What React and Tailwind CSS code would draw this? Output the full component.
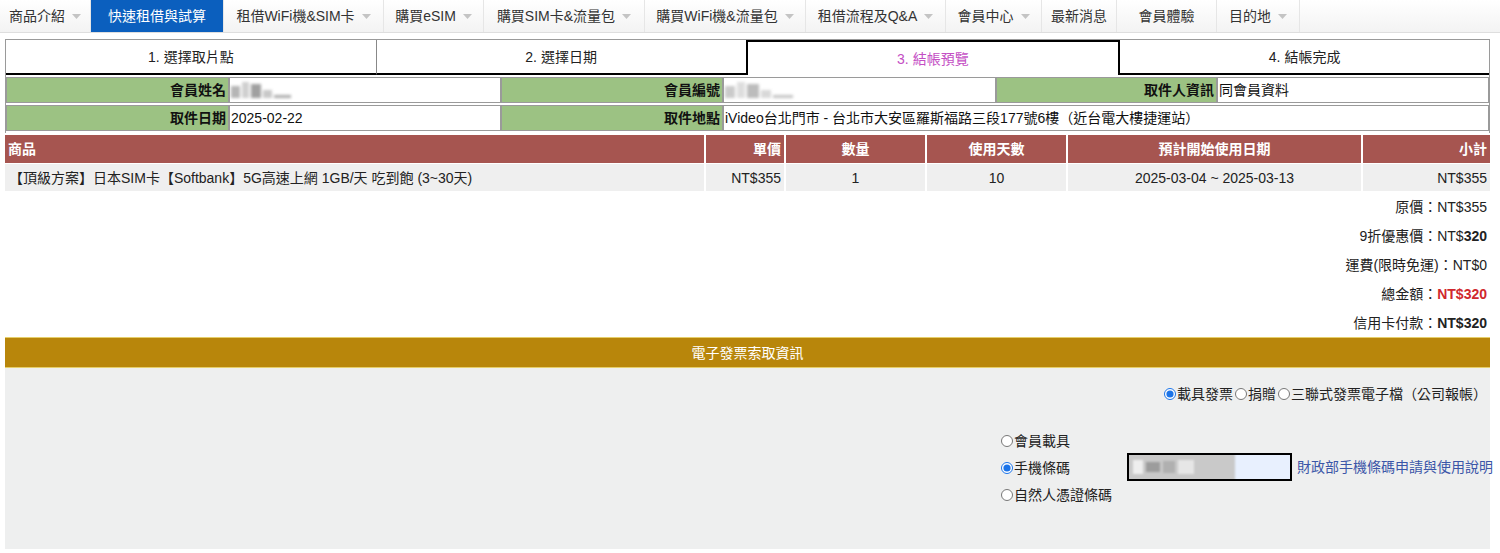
import React from 'react';

const navItems = [
  { label: '商品介紹', w: 'w-[91px]', caret: true },
  { label: '快速租借與試算', w: 'w-[133px]', active: true },
  { label: '租借WiFi機&SIM卡', w: 'w-[160px]', caret: true },
  { label: '購買eSIM', w: 'w-[100px]', caret: true },
  { label: '購買SIM卡&流量包', w: 'w-[161px]', caret: true },
  { label: '購買WiFi機&流量包', w: 'w-[161px]', caret: true },
  { label: '租借流程及Q&A', w: 'w-[140px]', caret: true },
  { label: '會員中心', w: 'w-[96px]', caret: true },
  { label: '最新消息', w: 'w-[75px]' },
  { label: '會員體驗', w: 'w-[100px]' },
  { label: '目的地', w: 'w-[83px]', caret: true },
];

function Caret() {
  return (
    <svg width="9" height="5" viewBox="0 0 9 5" className="ml-[7px] mt-[1px]">
      <path d="M0 0h9L4.5 5z" fill="#c4c4c4" />
    </svg>
  );
}

function Blur({ className }) {
  return (
    <div className={'flex items-end gap-[2px] blur-[1.5px] ' + className}>
      <div className="h-[12px] w-[10px] bg-[#b5b5b5]" />
      <div className="h-[16px] w-[8px] bg-[#d0d0d0]" />
      <div className="h-[14px] w-[12px] bg-[#a0a0a0]" />
      <div className="h-[8px] w-[10px] bg-[#c8c8c8]" />
      <div className="h-[3px] w-[20px] bg-[#aaaaaa]" />
    </div>
  );
}

function Label({ children }) {
  return (
    <div className="flex items-center justify-end border border-[#9a9a9a] bg-[#9cc283] pr-[2px] font-bold text-[#111]">
      {children}
    </div>
  );
}

function Value({ children, className = '' }) {
  return (
    <div className={'flex items-center border border-[#9a9a9a] bg-white pl-[1px] text-[#111] ' + className}>
      {children}
    </div>
  );
}

function Radio({ checked, label, name }) {
  return (
    <label className="flex items-center whitespace-nowrap">
      <input type="radio" name={name} defaultChecked={checked} className="m-0 mr-[1px] h-[12px] w-[12px] shrink-0 accent-[#1a73e8]" />
      <span>{label}</span>
    </label>
  );
}

export default function App() {
  const font = { fontFamily: '"Liberation Sans", "Noto Sans CJK TC", sans-serif' };
  return (
    <div className="h-[553px] w-[1500px] overflow-hidden bg-white text-[14px] leading-[20px] text-[#222]" style={font}>
      {/* nav */}
      <div className="flex h-[33px] border-b border-[#dedede] bg-gradient-to-b from-white to-[#f3f3f3]">
        {navItems.map((item) => (
          <div
            key={item.label}
            className={
              'flex items-center justify-center border-r border-[#e6e6e6] ' +
              item.w +
              (item.active ? ' bg-[#0b5fbe] text-white' : ' text-[#333]')
            }
          >
            <span>{item.label}</span>
            {item.caret && <Caret />}
          </div>
        ))}
      </div>

      <div className="ml-[5px] mt-[6px] w-[1485px]">
        {/* steps */}
        <div className="border border-[#9a9a9a] border-b-0">
          <div className="grid h-[35px] grid-cols-4">
            <div className="flex items-center justify-center border-b-2 border-r border-black border-r-[#888]">1. 選擇取片點</div>
            <div className="flex items-center justify-center border-b-2 border-r-2 border-black">2. 選擇日期</div>
            <div className="flex items-center justify-center border-t-2 border-black text-[#c44ec4]">3. 結帳預覽</div>
            <div className="flex items-center justify-center border-b-2 border-l-2 border-black">4. 結帳完成</div>
          </div>

          {/* member info */}
          <div className="grid grid-cols-[223px_272px_222px_273px_221px_1fr] gap-y-[2px] py-[2px]">
            <Label>會員姓名</Label>
            <Value className="h-[26px]"><Blur className="w-[60px]" /></Value>
            <Label>會員編號</Label>
            <Value><Blur className="w-[90px] opacity-70" /></Value>
            <Label>取件人資訊</Label>
            <Value>同會員資料</Value>
            <Label>取件日期</Label>
            <Value className="h-[26px]">2025-02-22</Value>
            <Label>取件地點</Label>
            <Value className="col-span-3">iVideo台北門市 - 台北市大安區羅斯福路三段177號6樓（近台電大樓捷運站）</Value>
          </div>
        </div>

        {/* product table */}
        <div className="mt-[2px] grid grid-cols-[699px_78px_139px_139px_293px_1fr] gap-x-[2px] gap-y-[1px]">
          {['商品', '單價', '數量', '使用天數', '預計開始使用日期', '小計'].map((h, i) => (
            <div
              key={h}
              className={
                'flex h-[28px] items-center bg-[#a65550] px-[3px] font-bold text-white ' +
                (i === 0 ? 'justify-start' : i === 1 || i === 5 ? 'justify-end' : 'justify-center')
              }
            >
              {h}
            </div>
          ))}
          <div className="flex h-[27px] items-center bg-[#efefef] pl-[4px]">【頂級方案】日本SIM卡【Softbank】5G高速上網 1GB/天 吃到飽 (3~30天)</div>
          <div className="flex items-center justify-end bg-[#efefef] px-[3px]">NT$355</div>
          <div className="flex items-center justify-center bg-[#efefef]">1</div>
          <div className="flex items-center justify-center bg-[#efefef]">10</div>
          <div className="flex items-center justify-center bg-[#efefef]">2025-03-04 ~ 2025-03-13</div>
          <div className="flex items-center justify-end bg-[#efefef] px-[3px]">NT$355</div>
        </div>

        {/* summary */}
        <div className="flex flex-col items-end pr-[3px] pt-[1px] text-[#222]">
          <div className="flex h-[29px] items-center">原價：NT$355</div>
          <div className="flex h-[29px] items-center">9折優惠價：NT$<b>320</b></div>
          <div className="flex h-[29px] items-center">運費(限時免運)：NT$0</div>
          <div className="flex h-[29px] items-center">總金額：<b className="text-[#d0272d]">NT$320</b></div>
          <div className="flex h-[29px] items-center">信用卡付款：<b>NT$320</b></div>
        </div>

        {/* invoice */}
        <div className="flex h-[31px] items-center justify-center border-y border-[#e6cf6a] bg-[#b8860b] text-white">電子發票索取資訊</div>
        <div className="h-[181px] bg-[#eeefef]">
          <div className="flex justify-end pr-[3px] pt-[16px]">
            <Radio name="type" checked label="載具發票" />
            <span className="w-[2px]" />
            <Radio name="type" label="捐贈" />
            <span className="w-[2px]" />
            <Radio name="type" label="三聯式發票電子檔（公司報帳）" />
          </div>
          <div className="ml-[996px] mt-[23px] flex items-start whitespace-nowrap">
            <div className="flex w-[126px] shrink-0 flex-col">
              <div className="flex h-[27px] items-center"><Radio name="carrier" label="會員載具" /></div>
              <div className="flex h-[27px] items-center"><Radio name="carrier" checked label="手機條碼" /></div>
              <div className="flex h-[27px] items-center"><Radio name="carrier" label="自然人憑證條碼" /></div>
            </div>
            <div className="mt-[26px] flex h-[28px] w-[165px] shrink-0 items-center overflow-hidden border-2 border-black bg-[#e8f0fe]">
              <div className="ml-[-2px] flex h-[32px] w-[108px] items-center gap-[3px] bg-[#c9c9c9] px-[6px] blur-[1px]">
                <div className="h-[14px] w-[10px] bg-[#eeeeee]" />
                <div className="h-[10px] w-[14px] bg-[#9c9c9c]" />
                <div className="h-[12px] w-[12px] bg-[#b0b0b0]" />
                <div className="h-[14px] w-[16px] bg-[#e6e6e6]" />
              </div>
            </div>
            <a className="ml-[5px] mt-[30px] shrink-0 text-[#3b56a8]">財政部手機條碼申請與使用說明</a>
          </div>
        </div>
      </div>
    </div>
  );
}
